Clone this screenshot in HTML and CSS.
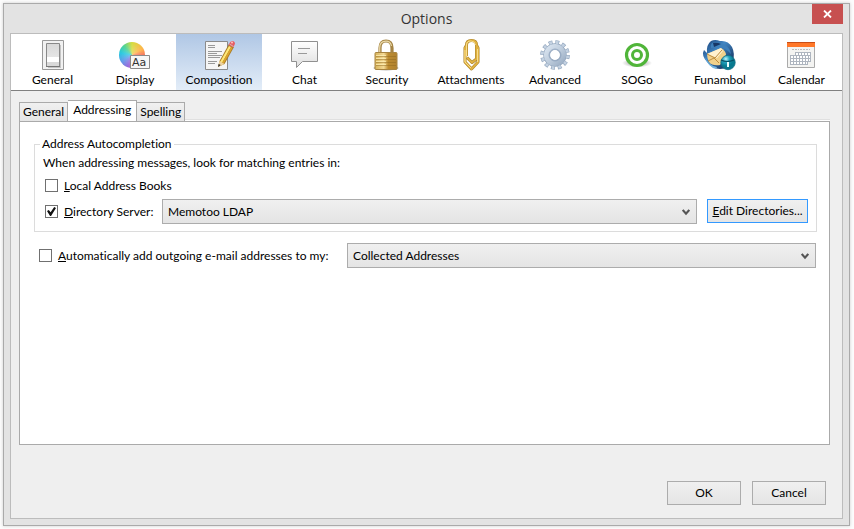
FILE: index.html
```html
<!DOCTYPE html>
<html lang="en">
<head>
<meta charset="utf-8">
<title>Options</title>
<link rel="stylesheet" href="styles.css">
</head>
<body>
<main class="window">
  <header class="titlebar">
    <h1 class="title">Options</h1>
    <button class="close" type="button" aria-label="Close"><svg width="9" height="8" viewBox="0 0 9 8"><path d="M1 .5 8 7.500M8 .5 1 7.500" stroke="#fff" stroke-width="1.800"/></svg></button>
  </header>
  <div class="client">
    <nav class="toolbar">
      <button class="tool" type="button">
        <svg class="icon" viewBox="0 0 32 32">
          <defs><linearGradient id="sw" x1="0" x2="0" y2="1"><stop stop-color="#d8d8d8"/><stop offset="1" stop-color="#eee"/></linearGradient></defs>
          <path d="M5.500.5h21v29h-21z" fill="#f1f1f1" stroke="#999"/>
          <path d="M11 5h13v23H11z" fill="#c4c4c4"/>
          <path d="M9.500 3.500h13v23h-13z" fill="url(#sw)" stroke="#888"/>
          <path d="M10 17h12v5H10z" fill="#fff"/><path d="M10 22h12v4H10z" fill="#d9d9d9"/><path d="M9 26.500h14" stroke="#777"/>
        </svg>
        <span>General</span>
      </button>
      <button class="tool" type="button">
        <span class="icon wheel-icon"><span class="wheel"></span><svg class="swatch" width="21" height="15" viewBox="0 0 21 15"><path d="M.5.5h19v13H.5z" fill="#f6f6f6" stroke="#8a8a8a"/><text class="swatch-text" x="2" y="11">Aa</text></svg></span>
        <span>Display</span>
      </button>
      <button class="tool selected" type="button">
        <svg class="icon" viewBox="0 0 32 32">
          <path d="M2.500 1.500h22v28h-22z" fill="#f5f5f5" stroke="#8b8b8b"/>
          <path d="M5 5.500h7M5 7.500h7M5 11.500h14M5 13.500h9M5 15.500h14M5 17.500h12M5 21.500h9M5 23.500h7" stroke="#999"/>
          <path d="m15 27 1.500-6L26 4l5 3-9.500 17z" fill="#a87a24"/>
          <path d="m17 22 9-16 2 1-9 16z" fill="#ffe878"/><path d="m19 23 9-16 1.500 1-9 16z" fill="#dba42d"/>
          <path d="m15 27 1.500-6 5 3z" fill="#edd3a0"/><path d="m15 27 .7-3 2 1z" fill="#222"/>
          <path d="m25.500 5 1-2Q29-.5 31.500 2q1 1.500 0 3L30 7.500z" fill="#e65d65"/><path d="m26.500 4 4 2.500" stroke="#d9b5ad"/><circle cx="29" cy="2.500" r="1" fill="#ffc3bd"/>
        </svg>
        <span>Composition</span>
      </button>
      <button class="tool" type="button">
        <svg class="icon" viewBox="0 0 32 32">
          <defs><linearGradient id="bubble" x1="0" x2="0" y2="1"><stop stop-color="#fff"/><stop offset="1" stop-color="#dedede"/></linearGradient></defs>
          <path d="M2.500 1.500h26v20H13.500l-6 6v-6h-5z" fill="url(#bubble)" stroke="#909090"/>
          <path d="M9 8.500h12M9 13.500h9" stroke="#999"/>
        </svg>
        <span>Chat</span>
      </button>
      <button class="tool" type="button">
        <svg class="icon" viewBox="0 0 32 32">
          <defs><linearGradient id="brass"><stop stop-color="#d7b35b"/><stop offset=".4" stop-color="#f3d994"/><stop offset=".6" stop-color="#bd8c30"/><stop offset="1" stop-color="#b08230"/></linearGradient></defs>
          <ellipse cx="15" cy="28" rx="12.500" ry="2.500" fill="#bbb"/>
          <g transform="translate(1)">
          <path d="M8 14V8Q8 1 14 1t6 7v6" fill="none" stroke="#a58444" stroke-width="3.200"/>
          <path d="M7.700 14V8Q7.700 1.200 14 1.200 18.500 1.200 19.500 6" fill="none" stroke="#ead9a8" stroke-width="1.200"/>
          <path d="M4 12.500h20q1 0 1 1v15q0 1-1 1H4q-1 0-1-1v-15q0-1 1-1z" fill="url(#brass)" stroke="#a88440"/>
          <path d="M4 16.500h20M4 19.500h20M4 22.500h20M4 25.500h20" stroke="#8e671e" opacity=".45"/>
          <path d="M4 15.500h10M4 18.500h10M4 21.500h10M4 24.500h10" stroke="#fff0b5" opacity=".75"/>
          </g>
        </svg>
        <span>Security</span>
      </button>
      <button class="tool" type="button">
        <svg class="icon" viewBox="0 0 32 32">
          <g fill="none" stroke-linejoin="round"><path d="M11.500 16V5q0-4.500 5-4.500t5 4.500v14l-4.500 3.500-5-5M11 6l-1 2v14l6.500 7 6.500-7V8l-1-2" stroke="#a67f2c" stroke-width="3"/>
          <path d="M11.500 16V5q0-4.500 5-4.500t5 4.500v14l-4.500 3.500-5-5M11 6l-1 2v14l6.500 7 6.500-7V8l-1-2" stroke="#dfb13f" stroke-width="2"/>
          <path d="M11.500 16V5q0-4 4.500-4 4 0 4.500 4M10 10v12l6 6M22.500 9v13" stroke="#ffe8a0" stroke-width=".8"/></g>
        </svg>
        <span>Attachments</span>
      </button>
      <button class="tool" type="button">
        <svg class="icon" viewBox="0 0 32 32">
          <defs><linearGradient id="steel" x2="1" y2="1"><stop stop-color="#d8e3ef"/><stop offset=".5" stop-color="#bfcddd"/><stop offset="1" stop-color="#9cafc5"/></linearGradient></defs>
          <circle cx="16" cy="15" r="12.800" fill="none" stroke="#8fa3bb" stroke-width="4" stroke-dasharray="3.800 2.902"/>
          <circle cx="16" cy="15" r="8.300" fill="none" stroke="#8fa3bb" stroke-width="6.800"/>
          <circle cx="16" cy="15" r="12.800" fill="none" stroke="#c3d1e1" stroke-width="3" stroke-dasharray="2.700 4.002" stroke-dashoffset="-.5"/>
          <circle cx="16" cy="15" r="8.300" fill="none" stroke="url(#steel)" stroke-width="5.500"/>
          <circle cx="16" cy="15" r="6" fill="none" stroke="#8ea2bd" stroke-width=".8"/>
          <circle cx="16" cy="15" r="4.500" fill="#fff"/>
        </svg>
        <span>Advanced</span>
      </button>
      <button class="tool" type="button">
        <svg class="icon" viewBox="0 0 32 32">
          <defs><radialGradient id="shade"><stop stop-color="#888"/><stop offset="1" stop-color="#fff"/></radialGradient></defs>
          <ellipse cx="16" cy="23" rx="15" ry="4.500" fill="url(#shade)"/>
          <circle cx="16" cy="15" r="10.500" fill="#fff" stroke="#50b539" stroke-width="3.200"/>
          <circle cx="16" cy="15" r="4.500" fill="#fff" stroke="#50b539" stroke-width="3"/>
        </svg>
        <span>SOGo</span>
      </button>
      <button class="tool" type="button">
        <svg class="icon" viewBox="0 0 32 32">
          <defs><linearGradient id="bird" x2="1" y2="1"><stop stop-color="#163a70"/><stop offset=".4" stop-color="#4287c4"/><stop offset="1" stop-color="#0a1c43"/></linearGradient><radialGradient id="orb" cx=".35" cy=".25"><stop stop-color="#bdf5fa"/><stop offset=".5" stop-color="#22a2be"/><stop offset="1" stop-color="#08798f"/></radialGradient></defs>
          <g transform="translate(-1)">
          <path d="M8 1Q12-1 17 1q8-1 12 6 3 6 1 14-4 8-13 8-8 0-13-7Q-2 15 1 10l3 3Q3 5 8 1z" fill="url(#bird)"/>
          <path d="M9 3q8-2 13 2 5 3 6 9-6-7-14-7l-6 1Q7 5 9 3z" fill="#3e80bb"/><path d="M10 3q4-1 8 1l-7 3z" fill="#173766"/>
          <path d="m4 14 14-6q5 3 5 7l-6 10Q9 26 6 22q-2-4-2-8z" fill="#f1d18b"/>
          <path d="m4 14 14-6 2 3-6 7z" fill="#fff1cf"/><path d="m4 14 8 4 7-8M5 21l6-3 5 5" fill="none" stroke="#bd8c3d"/>
          <path d="M2 17q4 9 12 10l-1 2Q5 27 2 17z" fill="#75b5df"/>
          <circle cx="25" cy="22.500" r="7.200" fill="url(#orb)" stroke="#116d83" stroke-width=".8"/><path d="M18 20q6 3 13 0" fill="none" stroke="#074f65" stroke-width="1.200"/><path d="M25 22v5" stroke="#e9ffff" stroke-width="2"/>
          </g>
        </svg>
        <span>Funambol</span>
      </button>
      <button class="tool" type="button">
        <svg class="icon" viewBox="0 0 32 32">
          <path d="M1.500 2.500h27v25h-27z" fill="#f4f4f2" stroke="#aaa"/><path d="M1 2h28v5H1z" fill="#ff7728"/><path d="M1 2.500h28" stroke="#c94e16"/>
          <path d="M6 9.500h7m1 0h2m1 0h7" stroke="#bbb" stroke-dasharray="2 1"/>
          <path d="M9 12h16v10h-3v3H4V15h5z" fill="#aeb5bf"/>
          <path d="M10 14h14M5 17h19M5 20h19M5 23h16" stroke="#fff" stroke-width="2" stroke-dasharray="2 1"/>
        </svg>
        <span>Calendar</span>
      </button>
    </nav>
    <section class="pane">
      <div class="tabs" role="tablist">
        <button class="tab" type="button" role="tab">General</button>
        <button class="tab active" type="button" role="tab" aria-selected="true">Addressing</button>
        <button class="tab" type="button" role="tab">Spelling</button>
      </div>
      <div class="panel" role="tabpanel">
        <fieldset class="group">
          <legend>Address Autocompletion</legend>
          <p class="intro">When addressing messages, look for matching entries in:</p>
          <div class="row local">
            <input class="check" type="checkbox" id="local"><label for="local"><u>L</u>ocal Address Books</label>
          </div>
          <div class="row">
            <input class="check" type="checkbox" id="directory" checked><label class="server-label" for="directory"><u>D</u>irectory Server:</label>
            <div class="dropdown">
              <select aria-label="Directory server"><option>Memotoo LDAP</option></select>
              <svg class="chevron" width="8" height="7" viewBox="0 0 8 7"><path d="M.7 1 4 4.700 7.300 1" fill="none" stroke="#555" stroke-width="2.200"/></svg>
            </div>
            <button class="button edit" type="button"><u>E</u>dit Directories...</button>
          </div>
        </fieldset>
        <div class="row collect">
          <input class="check" type="checkbox" id="auto"><label class="auto-label" for="auto"><u>A</u>utomatically add outgoing e-mail addresses to my:</label>
          <div class="dropdown">
            <select aria-label="Address book"><option>Collected Addresses</option></select>
            <svg class="chevron" width="8" height="7" viewBox="0 0 8 7"><path d="M.7 1 4 4.700 7.300 1" fill="none" stroke="#555" stroke-width="2.200"/></svg>
          </div>
        </div>
      </div>
      <footer class="actions">
        <button class="button" type="button">OK</button>
        <button class="button" type="button">Cancel</button>
      </footer>
    </section>
  </div>
</main>
</body>
</html>
```
FILE: styles.css
```css
* { box-sizing: border-box; }

body {
  margin: 0;
  padding: 3px 4px 3px 3px;
  min-height: 100vh;
  display: flex;
  background: #fcfcfc;
  color: #000;
  font: 12px/16px Lato, "Open Sans", sans-serif;
  font-variant-ligatures: none;
}

button, select { font: inherit; font-variant-ligatures: none; color: inherit; margin: 0; }

.window {
  flex: 1;
  display: flex;
  flex-direction: column;
  padding: 0 6px 6px;
  border: 1px solid #aaa;
  background: #e3e3e3;
  box-shadow: 0 0 3px #ccc;
}

.titlebar {
  position: relative;
  height: 29px;
  display: flex;
  justify-content: center;
  align-items: center;
}

.title { margin: 0; font: 14px/20px "Open Sans", sans-serif; color: #333; }

.close {
  position: absolute;
  top: 0;
  right: 0;
  width: 31px;
  height: 20px;
  padding: 0;
  border: 0;
  background: #c75050;
  display: grid;
  place-items: center;
}

.client {
  flex: 1;
  display: flex;
  flex-direction: column;
  border: 1px solid #bcbcbc;
  background: #efefef;
}

.toolbar {
  display: grid;
  grid-template-columns: 83fr 82fr 86fr 85fr 80fr 88fr 80fr 84fr 82fr 81fr;
  background: #fff;
  border-bottom: 1px solid #808080;
}

.tool {
  min-width: 0;
  height: 56px;
  padding: 6px 0 0;
  border: 0;
  background: none;
  display: flex;
  flex-direction: column;
  align-items: center;
}

.tool.selected { background: linear-gradient(#b0c7e5, #e3edf8); }

.icon { display: block; width: 32px; height: 32px; overflow: visible; flex: none; }

.wheel-icon { position: relative; }

.wheel {
  position: absolute;
  left: 0;
  top: 2px;
  width: 26px;
  height: 26px;
  border-radius: 50%;
  background: radial-gradient(circle, rgba(255,255,255,.3), transparent 70%), conic-gradient(#d5dc3c, #ffb347 60deg, #f25b62 100deg, #e66bad 150deg, #9568db 200deg, #5b9bea 240deg, #22c7df 280deg, #4ed390 320deg, #d5dc3c);
}

.swatch { position: absolute; left: 11px; top: 15px; }
.swatch-text { font: 11px "DejaVu Sans", sans-serif; fill: #333; }

.pane { flex: 1; display: flex; flex-direction: column; padding: 9px 12px 13px 8px; }

.tabs { position: relative; z-index: 1; display: flex; align-items: flex-end; }

.tab {
  height: 19px;
  padding: 0 3px;
  border: 1px solid #aaa;
  border-bottom: 0;
  background: linear-gradient(#f0f0f0, #e5e5e5);
}

.tab + .tab { border-left: 0; }
.tab.active { height: 21px; padding: 0 5px 2px; background: #fff; }

.panel {
  flex: 1;
  padding: 14px 12px 12px 14px;
  border: 1px solid #aaa;
  background: #fff;
  box-shadow: 0 -1px 0 #fff, 0 -2px 0 #e0e0e0;
}

.group { margin: 0; padding: 0 8px 7px 10px; border: 1px solid #dcdcdc; min-width: 0; }
.group legend { margin-left: -5px; padding: 0 2px; }
.intro { margin: 3px 0 6px -2px; }

.row { display: flex; align-items: center; }
.local { height: 17px; margin-bottom: 5px; }

.check {
  appearance: none;
  flex: none;
  position: relative;
  width: 13px;
  height: 13px;
  margin: 0 6px 0 0;
  border: 1px solid #707070;
  background: #fff;
}

.check:checked::after {
  content: "";
  position: absolute;
  inset: 1px;
  background: #111;
  clip-path: polygon(0 45%, 20% 32%, 40% 58%, 80% 0, 100% 12%, 45% 100%, 34% 100%);
}

.server-label { width: 98px; }
.auto-label { width: 289px; }
label { white-space: nowrap; }

.dropdown { position: relative; flex: 1; }

select {
  appearance: none;
  display: block;
  width: 100%;
  height: 25px;
  padding: 0 24px 0 5px;
  border: 1px solid #acacac;
  border-radius: 0;
  background: linear-gradient(#f0f0f0, #e4e4e4);
}

.chevron { position: absolute; right: 7px; top: 10px; pointer-events: none; }

.button {
  width: 74px;
  height: 24px;
  padding: 0;
  border: 1px solid #acacac;
  background: linear-gradient(#f0f0f0, #e5e5e5);
  white-space: nowrap;
}

.edit { align-self: flex-start; width: 101px; margin-left: 10px; border-color: #3399ff; }
.collect { margin: 11px 1px 0 5px; }
.actions { display: flex; justify-content: flex-end; gap: 11px; margin: 36px 4px 0 0; }
```
